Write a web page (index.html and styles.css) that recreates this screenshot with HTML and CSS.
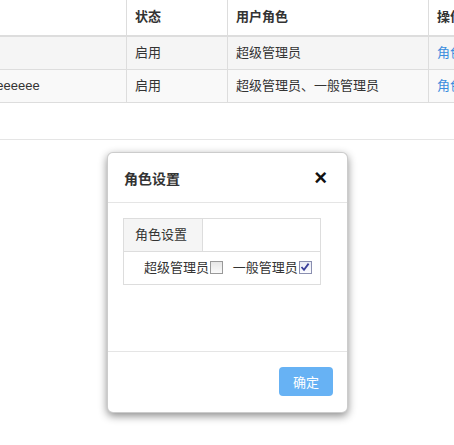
FILE: index.html
```html
<!DOCTYPE html>
<html>
<head>
<meta charset="utf-8">
<link rel="stylesheet" href="styles.css">
</head>
<body>
<div class="page">
  <table class="grid">
    <colgroup>
      <col class="c1"><col class="c2"><col class="c3"><col class="c4">
    </colgroup>
    <thead>
      <tr><th></th><th>状态</th><th>用户角色</th><th>操作</th></tr>
    </thead>
    <tbody>
      <tr class="odd"><td></td><td>启用</td><td>超级管理员</td><td><a class="link">角色设置</a></td></tr>
      <tr class="even"><td>eeeeeee</td><td>启用</td><td>超级管理员、一般管理员</td><td><a class="link">角色设置</a></td></tr>
    </tbody>
  </table>
  <div class="pager"></div>
</div>

<div class="modal">
  <div class="modal-header">
    <span class="modal-title">角色设置</span>
    <span class="close">×</span>
  </div>
  <div class="modal-body">
    <table class="roles">
      <tr><td class="label">角色设置</td><td></td></tr>
      <tr>
        <td colspan="2" class="opts">
          <span class="opt">超级管理员<span class="cb"></span></span>
          <span class="opt">一般管理员<span class="cb checked"><svg width="10" height="10" viewBox="0 0 10 10"><path d="M1.5 5 L4 7.8 L8.6 1.6" fill="none" stroke="#3a3f9a" stroke-width="1.8"/></svg></span></span>
        </td>
      </tr>
    </table>
  </div>
  <div class="modal-footer">
    <button class="btn">确定</button>
  </div>
</div>
</body>
</html>
```

FILE: styles.css
```css
html, body {
  margin: 0;
  padding: 0;
  background: #fff;
  overflow: hidden;
  font-family: "Liberation Sans", "Noto Sans CJK SC", sans-serif;
  font-size: 13px;
  color: #333;
}

.page {
  width: 454px;
  height: 445px;
  overflow: hidden;
}

.grid {
  border-collapse: collapse;
  table-layout: fixed;
  width: 560px;
  margin-left: -20px;
}

.grid .c1 { width: 146px; }
.grid .c2 { width: 101px; }
.grid .c3 { width: 201px; }
.grid .c4 { width: 112px; }

.grid th, .grid td {
  border: 1px solid #ddd;
  padding: 8px 8px;
  line-height: 16px;
  text-align: left;
  white-space: nowrap;
  overflow: hidden;
}

.grid th {
  font-weight: bold;
  border-top: none;
  border-bottom: 2px solid #ddd;
  padding: 9px 8px 10px;
  height: 16px;
}

.grid .odd td { background: #f5f5f5; }
.grid .even td { background: #f9f9f9; }

.link { color: #3c8dde; }

.pager {
  height: 36px;
  border-bottom: 1px solid #e5e5e5;
}

.modal {
  position: absolute;
  left: 107px;
  top: 152px;
  width: 241px;
  height: 261px;
  box-sizing: border-box;
  background: #fff;
  border: 1px solid rgba(0,0,0,0.2);
  border-radius: 6px;
  box-shadow: 0 3px 9px rgba(0,0,0,0.45);
  display: flex;
  flex-direction: column;
}

.modal-header {
  height: 50px;
  flex: none;
  box-sizing: border-box;
  padding: 0 16px;
  border-bottom: 1px solid #e5e5e5;
  display: flex;
  align-items: center;
  justify-content: space-between;
}

.modal-title {
  font-size: 14px;
  font-weight: bold;
  color: #333;
  margin-top: 1px;
}

.close {
  font-size: 22px;
  font-weight: bold;
  color: #111;
  line-height: 1;
  margin-right: 4px;
  margin-top: 1px;
}

.modal-body {
  flex: 1;
  padding: 15px;
}

.roles {
  border-collapse: collapse;
  width: 198px;
  table-layout: fixed;
}

.roles td {
  border: 1px solid #ddd;
  height: 33px;
  padding: 0;
  box-sizing: border-box;
  line-height: 16px;
}

.roles .label {
  width: 79px;
  background: #f5f5f5;
  padding-left: 11px;
  color: #333;
}

.roles .opts {
  padding-left: 20px;
  white-space: nowrap;
}

.opt {
  display: inline-flex;
  align-items: center;
  margin-right: 6px;
}

.cb {
  display: inline-flex;
  align-items: center;
  justify-content: center;
  width: 11px;
  height: 11px;
  border: 1px solid #999;
  background: linear-gradient(#e6e6e6, #fafafa);
  margin-left: 1px;
  margin-top: -2px;
}

.cb.checked {
  border-color: #8a8fb0;
  background: linear-gradient(#e9ebf5, #fcfcff);
}

.modal-footer {
  height: 61px;
  flex: none;
  box-sizing: border-box;
  border-top: 1px solid #e5e5e5;
  padding: 15px 14px;
  display: flex;
  justify-content: flex-end;
  align-items: flex-start;
}

.btn {
  width: 54px;
  height: 29px;
  border: none;
  border-radius: 4px;
  background: #67b2f4;
  color: #fff;
  font-family: "Liberation Sans", "Noto Sans CJK SC", sans-serif;
  font-size: 13px;
  padding: 0;
}
```
